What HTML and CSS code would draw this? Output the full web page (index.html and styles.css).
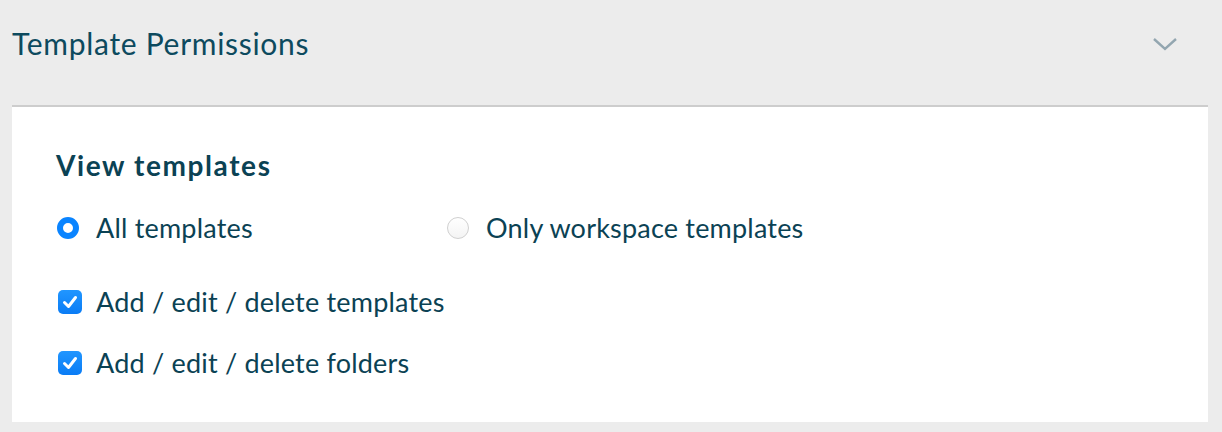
FILE: index.html
```html
<!DOCTYPE html>
<html lang="en">
<head>
    <meta charset="UTF-8">
    <title>Template Permissions</title>
    <link rel="stylesheet" href="styles.css">
</head>
<body>
    <div class="section">
        <div class="section-header">
            <h2>Template Permissions</h2>
            <svg class="chevron" width="26" height="16" viewBox="0 0 26 16">
                <path d="M2 3 L13 13 L24 3" fill="none" stroke="#93a6b0" stroke-width="2.4"/>
            </svg>
        </div>

        <div class="panel">
            <h3>View templates</h3>

            <div class="radio-row">
                <label class="option">
                    <span class="radio checked"></span>
                    All templates
                </label>
                <label class="option">
                    <span class="radio"></span>
                    Only workspace templates
                </label>
            </div>

            <label class="option check-row">
                <span class="checkbox">
                    <svg width="18" height="18" viewBox="0 0 18 18"><path d="M3.5 9.5 L7.5 13.5 L14.5 4.5" fill="none" stroke="#fff" stroke-width="3" stroke-linecap="round" stroke-linejoin="round"/></svg>
                </span>
                Add / edit / delete templates
            </label>
            <label class="option check-row">
                <span class="checkbox">
                    <svg width="18" height="18" viewBox="0 0 18 18"><path d="M3.5 9.5 L7.5 13.5 L14.5 4.5" fill="none" stroke="#fff" stroke-width="3" stroke-linecap="round" stroke-linejoin="round"/></svg>
                </span>
                Add / edit / delete folders
            </label>
        </div>
    </div>
</body>
</html>
```

FILE: styles.css
```css
* {
    margin: 0;
    padding: 0;
    box-sizing: border-box;
}

body {
    font-family: 'Lato', 'Open Sans', sans-serif;
    background: #ececec;
    color: #0b4254;
}

/* Section wrapper */
.section {
    padding: 0 14px 10px 12px;
}

.section-header {
    height: 107px;
    display: flex;
    justify-content: space-between;
    align-items: flex-start;
    padding-top: 25px;
    border-bottom: 2px solid #cdcdcd;
}

.section-header h2 {
    font-size: 30px;
    font-weight: 400;
    line-height: 36px;
    letter-spacing: 0.7px;
    color: #0d4a5e;
}

.chevron {
    margin-top: 11px;
    margin-right: 30px;
}

/* White panel */
.panel {
    background: #fff;
    height: 315px;
    padding: 42px 44px 0 44px;
}

.panel h3 {
    font-size: 28px;
    font-weight: 700;
    line-height: 32px;
    letter-spacing: 1.6px;
    color: #0b4254;
}

.radio-row {
    display: flex;
    margin-top: 31px;
}

.radio-row .option {
    width: 390px;
}

.option {
    display: flex;
    align-items: center;
    font-size: 27px;
    line-height: 32px;
    letter-spacing: 0.2px;
    gap: 16px;
}

.radio {
    width: 22px;
    height: 22px;
    border-radius: 50%;
    border: 1px solid #d0d0d0;
    background: linear-gradient(#fff, #f4f4f4);
    margin-left: 1px;
    margin-right: 1px;
}

.radio.checked {
    border: 6px solid #0a84ff;
    background: #fff;
}

.check-row {
    margin-top: 42px;
}

.check-row + .check-row {
    margin-top: 29px;
}

.checkbox {
    width: 24px;
    height: 24px;
    border-radius: 5px;
    background: linear-gradient(#2196ff, #0a7cf5);
    display: flex;
    align-items: center;
    justify-content: center;
    margin-left: 2px;
    margin-right: -2px;
}
```
